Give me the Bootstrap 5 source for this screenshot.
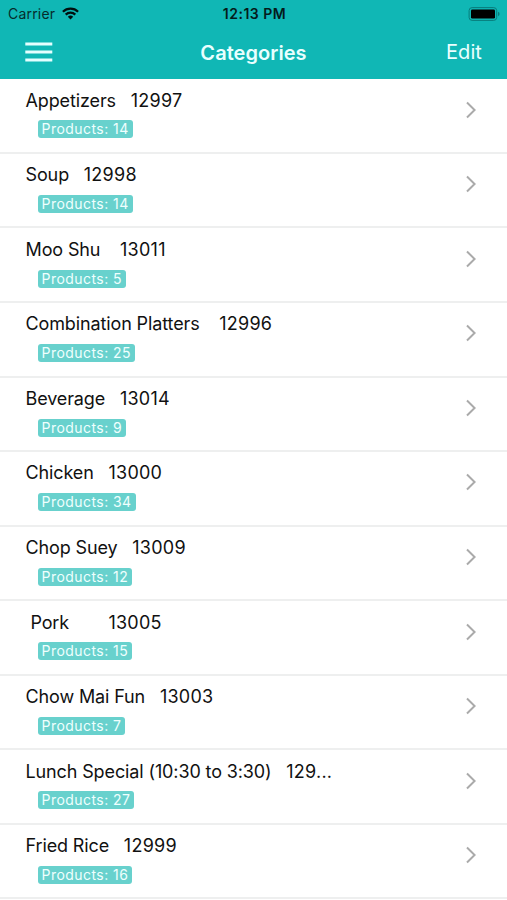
<!DOCTYPE html>
<html lang="en">
<head>
<meta charset="utf-8">
<meta name="viewport" content="width=device-width, initial-scale=1">
<title>Categories</title>
<link href="https://cdn.jsdelivr.net/npm/bootstrap@5.3.0/dist/css/bootstrap.min.css" rel="stylesheet">
<style>
body{font-family:Inter,"Liberation Sans",sans-serif;color:#111;background:#fff;height:900px;overflow:hidden}
.topbar{background:#10b7b5;height:79px}
.status{height:27px;padding:0 6px 0 8px;font-size:14px;line-height:27px;color:#062c2c}
.carrier{letter-spacing:.2px}
.wifi{margin-left:7px}
.battery{margin-right:1px}
.status-time{font-weight:600;font-size:14px;letter-spacing:.5px;color:#041c1c}
.titlebar{height:52px;padding:0 25px;color:#e9ffff;line-height:51px}
.bar-title{font-size:20px;font-weight:600;letter-spacing:.05px}
.bar-action{font-size:20px;letter-spacing:.1px}
.side{flex:1 1 0}
.cat-row{height:74.55px;padding:9.3px 31px 0 25.5px;border-bottom:2px solid #eeefef}
.cat-row:first-child{margin-top:.4px}
.cat-name{font-size:18px;line-height:24px;white-space:pre;letter-spacing:-.12px;word-spacing:-.03px}
.cat-id{letter-spacing:.25px}
.count{background:#68d1cd;color:#effffe;font-size:14px;line-height:18px;height:18px;border-radius:3px;padding:0 4px;margin:7.8px 0 0 12px;letter-spacing:.45px}
.chev{margin-top:12px}
</style>
</head>
<body>
<header class="topbar">
  <div class="status d-flex align-items-center">
    <div class="side d-flex align-items-center">
      <span class="carrier">Carrier</span>
      <svg class="wifi" width="17" height="13" viewBox="0 0 17 13"><g fill="none" stroke="#000f0f" stroke-width="2.2"><path d="M.9 4.7a10.8 10.8 0 0 1 15.2 0"/><path d="M3.7 7.6a6.8 6.8 0 0 1 9.6 0"/></g><path d="M5.8 9.8a3.9 3.9 0 0 1 5.4 0L8.5 12.6z" fill="#000f0f"/></svg>
    </div>
    <span class="status-time">12:13 PM</span>
    <div class="side d-flex justify-content-end">
      <svg class="battery" width="32" height="14" viewBox="0 0 32 14"><rect x="1.1" y=".6" width="27.6" height="12.8" rx="3" fill="none" stroke="#087c7b"/><rect x="3" y="2.4" width="24" height="9.2" rx="1.4" fill="#000"/><path d="M30 4.8q1.6.6 1.6 2.2T30 9.2z" fill="#087c7b"/></svg>
    </div>
  </div>
  <div class="titlebar d-flex align-items-center">
    <div class="side d-flex"><svg width="28" height="22" viewBox="0 0 28 22"><path d="M.3 1.9h27M.3 9.9h27M.3 17.9h27" stroke="#e4ffff" stroke-width="3"/></svg></div>
    <span class="bar-title">Categories</span>
    <div class="side text-end"><span class="bar-action">Edit</span></div>
  </div>
</header>
<main id="list"></main>
<script>
const rows = [
  ["Appetizers   ", "12997", 14], ["Soup   ", "12998", 14], ["Moo Shu    ", "13011", 5],
  ["Combination Platters    ", "12996", 25], ["Beverage   ", "13014", 9], ["Chicken   ", "13000", 34],
  ["Chop Suey   ", "13009", 12], [" Pork        ", "13005", 15], ["Chow Mai Fun   ", "13003", 7],
  ["Lunch Special (10:30 to 3:30)   ", "129...", 27], ["Fried Rice   ", "12999", 16]
];
document.getElementById("list").innerHTML = rows.map(([name, id, n]) => `
  <div class="cat-row d-flex justify-content-between align-items-start">
    <div class="d-flex flex-column align-items-start">
      <span class="cat-name">${name}<span class="cat-id">${id}</span></span>
      <span class="count">Products: ${n}</span>
    </div>
    <svg class="chev" width="10" height="18" viewBox="0 0 10 18"><path d="M1 1.5 8.6 9 1 16.5" fill="none" stroke="#aaa" stroke-width="2"/></svg>
  </div>`).join("");
</script>
<script src="https://cdn.jsdelivr.net/npm/bootstrap@5.3.0/dist/js/bootstrap.bundle.min.js"></script>
</body>
</html>
